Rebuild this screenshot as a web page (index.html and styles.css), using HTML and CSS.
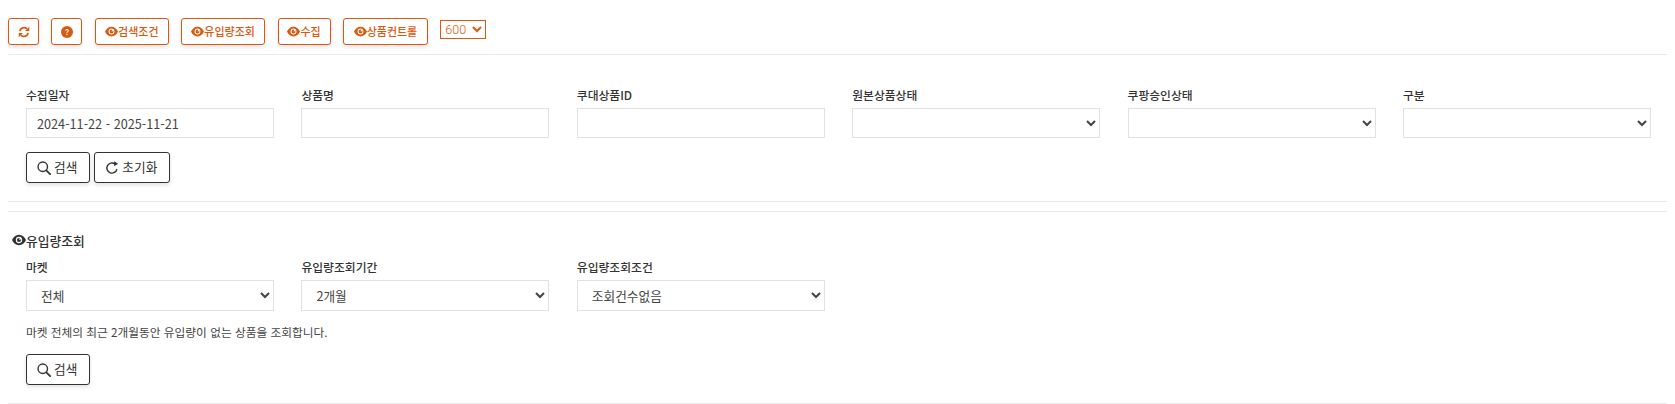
FILE: index.html
```html
<!DOCTYPE html>
<html lang="ko">
<head>
<meta charset="utf-8">
<title>상품 조회</title>
<link rel="stylesheet" href="styles.css">
</head>
<body>
<svg class="defs" width="0" height="0" aria-hidden="true">
  <symbol id="eye" viewBox="0 0 16 16"><path d="M8 2C4.300 2 1.400 4.600 0 8c1.400 3.400 4.300 6 8 6s6.600-2.600 8-6c-1.400-3.400-4.300-6-8-6zm0 9.600a3.600 3.600 0 1 1 0-7.200 3.600 3.600 0 0 1 0 7.200z"/><path d="M8 5.600a2.400 2.400 0 1 0 2.400 2.400c0-.3 0-.5-.1-.8L8 8.400l.8-2.700c-.3-.1-.5-.1-.8-.1z"/></symbol>
  <symbol id="search" viewBox="0 0 16 16"><circle cx="6.600" cy="6.600" r="5.400" fill="none" stroke="currentColor" stroke-width="1.600"/><path d="M10.600 10.600l4.400 4.400" stroke="currentColor" stroke-width="2" stroke-linecap="round" fill="none"/></symbol>
</svg>

<div class="toolbar">
  <button class="tool tool-icon" type="button"><svg class="ic-sync" viewBox="0 0 16 16"><path d="M2.400 6.800A5.800 5.800 0 0 1 12 3.600" fill="none" stroke="currentColor" stroke-width="2.400"/><path d="M15 1v5.600H9.400z" fill="currentColor"/><path d="M13.600 9.200A5.800 5.800 0 0 1 4 12.400" fill="none" stroke="currentColor" stroke-width="2.400"/><path d="M1 15V9.400h5.600z" fill="currentColor"/></svg></button>
  <button class="tool tool-icon" type="button"><svg class="ic-help" viewBox="0 0 16 16"><circle cx="8" cy="8" r="8" fill="currentColor"/><path d="M5.600 6.200C5.700 4.800 6.700 4 8.100 4c1.400 0 2.400.8 2.400 2 0 1.800-2 1.800-2 3.300H7.200C7.200 7.300 9 7.300 9 6.100c0-.5-.4-.9-1-.9-.6 0-1 .4-1.100 1z" fill="#fff"/><circle cx="7.900" cy="11.300" r="1" fill="#fff"/></svg></button>
  <button class="tool tool-a" type="button"><svg class="ic-eye"><use href="#eye"/></svg>검색조건</button>
  <button class="tool tool-b" type="button"><svg class="ic-eye"><use href="#eye"/></svg>유입량조회</button>
  <button class="tool tool-c" type="button"><svg class="ic-eye"><use href="#eye"/></svg>수집</button>
  <button class="tool tool-d" type="button"><svg class="ic-eye"><use href="#eye"/></svg>상품컨트롤</button>
  <select class="page-size"><option>600</option></select>
</div>
<hr class="rule rule-top">

<section class="form-grid">
  <div class="field"><label>수집일자</label><input class="ctl" type="text" value="2024-11-22 - 2025-11-21"></div>
  <div class="field"><label>상품명</label><input class="ctl" type="text"></div>
  <div class="field"><label>쿠대상품ID</label><input class="ctl" type="text"></div>
  <div class="field"><label>원본상품상태</label><select class="ctl sel"><option></option></select></div>
  <div class="field"><label>쿠팡승인상태</label><select class="ctl sel"><option></option></select></div>
  <div class="field"><label>구분</label><select class="ctl sel"><option></option></select></div>
</section>
<div class="actions">
  <button class="act" type="button"><svg class="ic-act"><use href="#search"/></svg>검색</button>
  <button class="act" type="button"><svg class="ic-act" viewBox="0 0 16 16"><path d="M13.600 9.200A5.800 5.800 0 1 1 11.400 3.400" fill="none" stroke="currentColor" stroke-width="1.600"/><path d="M10.400 .4v5.600L15 3.200z" fill="currentColor"/></svg>초기화</button>
</div>
<hr class="rule rule-mid">
<hr class="rule rule-sec">

<h2 class="sec-title"><svg class="ic-title"><use href="#eye"/></svg>유입량조회</h2>
<section class="form-grid form-grid-tight">
  <div class="field"><label>마켓</label><select class="ctl sel"><option>전체</option></select></div>
  <div class="field"><label>유입량조회기간</label><select class="ctl sel"><option>2개월</option></select></div>
  <div class="field"><label>유입량조회조건</label><select class="ctl sel"><option>조회건수없음</option></select></div>
</section>
<p class="note">마켓 전체의 최근 2개월동안 유입량이 없는 상품을 조회합니다.</p>
<div class="actions actions-last">
  <button class="act" type="button"><svg class="ic-act"><use href="#search"/></svg>검색</button>
</div>
<hr class="rule rule-end">
</body>
</html>
```

FILE: styles.css
```css
* { box-sizing: border-box; }
html, body { height: 100%; overflow: hidden; }
body {
  margin: 0;
  padding: 0 8px;
  background: #fff;
  color: #333;
  font-family: "Noto Sans CJK KR", "Noto Sans", sans-serif;
  font-size: 12px;
}
.defs { position: absolute; }
.toolbar {
  display: flex;
  align-items: flex-start;
  padding-top: 18px;
  height: 54px;
}
.tool {
  height: 27px;
  padding: 0;
  margin-right: 12.4px;
  display: inline-flex;
  align-items: center;
  justify-content: center;
  background: #fff;
  border: 1px solid #d9590f;
  border-radius: 3px;
  color: #d9590f;
  font: 500 11px/1 "Noto Sans CJK KR", sans-serif;
  box-shadow: 0 2px 4px rgba(0, 0, 0, .12);
}
.tool-icon { width: 31px; }
.tool-a { width: 74px; }
.tool-b { width: 84px; }
.tool-c { width: 53px; }
.tool-d { width: 85px; }
.ic-sync { width: 12px; height: 12px; }
.ic-help { width: 12px; height: 12px; }
.ic-eye { width: 13px; height: 13px; fill: currentColor; }
.page-size {
  width: 46px;
  height: 19px;
  margin-top: 2px;
  padding: 0;
  border: 1px solid #d9590f;
  border-radius: 0;
  background: #fff;
  color: #d9590f;
  font: 300 12.5px/1 Roboto, "Noto Sans CJK KR", sans-serif;
}
.rule { margin: 0; border: 0; border-top: 1px solid #e9e9e9; }
.form-grid {
  display: grid;
  grid-template-columns: repeat(6, 248px);
  column-gap: 27.4px;
  padding: 32px 0 0 18px;
}
.form-grid-tight { padding-top: 10px; }
.form-grid-tight .ctl { height: 31px; }
.field { display: flex; flex-direction: column; }
.field label {
  height: 21px;
  line-height: 15px;
  font-size: 11.8px;
  font-weight: 500;
  color: #333;
}
.ctl {
  width: 100%;
  height: 30px;
  padding: 0 10px;
  border: 1px solid #e1e1e1;
  border-radius: 0;
  background: #fff;
  color: #444;
  font: 400 12.7px/1 "Noto Sans CJK KR", sans-serif;
  outline: 0;
}
.actions {
  display: flex;
  gap: 4px;
  padding: 14px 0 0 18px;
  height: 63px;
}
.act {
  height: 31px;
  padding: 0 12px 0 10px;
  display: inline-flex;
  align-items: center;
  gap: 3px;
  background: #fff;
  border: 1px solid #333;
  border-radius: 3px;
  color: #333;
  font: 400 12.7px/1 "Noto Sans CJK KR", sans-serif;
  box-shadow: 0 2px 4px rgba(0, 0, 0, .12);
}
.ic-act { width: 14px; height: 14px; }
.rule-sec { margin-top: 9px; }
.sec-title {
  display: flex;
  align-items: center;
  margin: 19px 0 0 4px;
  height: 18px;
  font-size: 12.8px;
  font-weight: 500;
  color: #333;
}
.ic-title { width: 14px; height: 14px; fill: #333; }
.note {
  margin: 13px 0 0 18px;
  height: 15px;
  line-height: 15px;
  font-size: 11.7px;
  color: #444;
}
.actions-last { padding-top: 15px; height: 64px; }
```
